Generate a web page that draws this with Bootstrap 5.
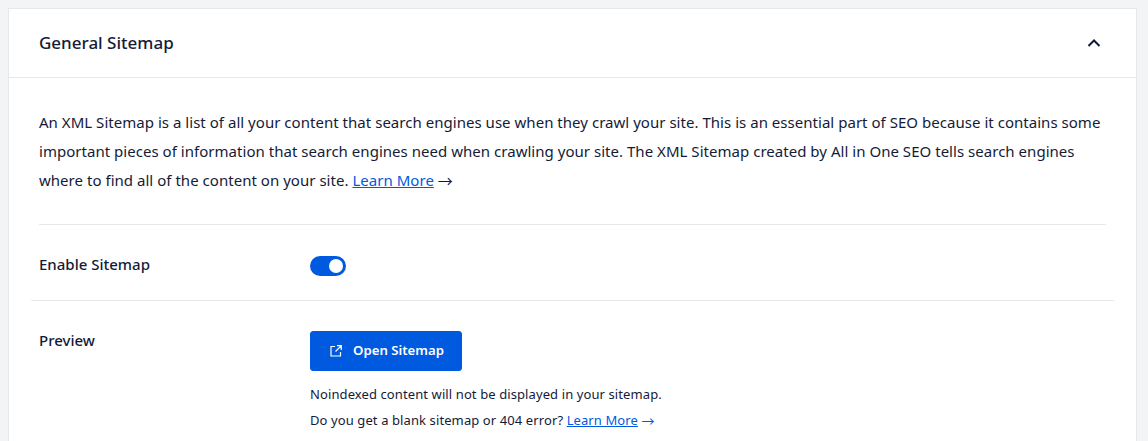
<!DOCTYPE html>
<html lang="en"><head><meta charset="utf-8"><title>General Sitemap</title>
<link href="https://cdn.jsdelivr.net/npm/bootstrap@5.3.0/dist/css/bootstrap.min.css" rel="stylesheet">
<style>
html,body{height:441px;overflow:hidden}
body{background:#f3f4f5;font-family:"Noto Sans","Open Sans",sans-serif;color:#141b38;padding:8px 11px 0 8px}
.sm-panel{background:#fff;border:1px solid #e8e8eb;border-bottom:0;height:433px;overflow:hidden}
.sm-head{height:69px;padding:0 35px 0 30px;border-bottom:1px solid #e8e8eb}
.sm-title{font-size:17px;font-weight:500;margin:0;line-height:1.2}
.sm-body{padding:30px 22px 0}
.sm-intro{font-size:15px;line-height:29px;margin:0 8px;padding-bottom:29px;border-bottom:1px solid #e8e8eb;letter-spacing:.03px}
.sm-row{padding:0 8px}
.sm-row1{height:76px;padding-top:6px;border-bottom:1px solid #e8e8eb}
.sm-row1 .sm-label{margin-bottom:4px}
.sm-row2{padding-top:30px}
.sm-label{width:271px;flex:none;font-size:15px;font-weight:500;line-height:18px}
.sm-toggle{width:36px;height:20px;border-radius:10px;background:#005ae0;position:relative}
.sm-toggle::after{content:"";position:absolute;right:3px;top:3px;width:14px;height:14px;border-radius:50%;background:#fff}
.sm-btn{background:#005ae0;border-color:#005ae0;color:#fff;font-size:13.2px;font-weight:600;width:152px;height:40px;border-radius:3px;padding:0 0 0 2px}
.sm-btn svg{margin-right:3px}
.sm-note{font-size:13px;line-height:26px;margin:0;letter-spacing:.1px}
.sm-note-first{margin-top:10px}
a.sm-link{color:#005ae0}
.sm-arrow{font-family:"Noto Sans CJK SC",sans-serif;line-height:1;vertical-align:-1px}
.sm-arrow-blue{color:#005ae0}
</style></head><body>
<div class="sm-panel">
<div class="sm-head d-flex align-items-center justify-content-between">
<h2 class="sm-title">General Sitemap</h2>
<svg width="14" height="14" viewBox="0 0 14 14" fill="none" stroke="#141b38" stroke-width="2"><path d="M1.500 10l5.500-5.500 5.500 5.500"/></svg>
</div>
<div class="sm-body">
<p class="sm-intro">An XML Sitemap is a list of all your content that search engines use when they crawl your site. This is an essential part of SEO because it contains some important pieces of information that search engines need when crawling your site. The XML Sitemap created by All in One SEO tells search engines where to find all of the content on your site. <a class="sm-link" href="#">Learn More</a> <span class="sm-arrow">→</span></p>
<div class="sm-row sm-row1 d-flex align-items-center">
<div class="sm-label">Enable Sitemap</div>
<div class="sm-toggle"></div>
</div>
<div class="sm-row sm-row2 d-flex">
<div class="sm-label">Preview</div>
<div>
<button class="btn sm-btn d-flex align-items-center justify-content-center gap-2" type="button">
<svg width="12" height="12" viewBox="0 0 12 12" fill="none" stroke="#fff" stroke-width="1.2"><path d="M5 1.500H1v9.500h9.500V7M7 .7h4.300V5M11 1L5.500 6.500"/></svg>Open Sitemap</button>
<p class="sm-note sm-note-first">Noindexed content will not be displayed in your sitemap.</p>
<p class="sm-note">Do you get a blank sitemap or 404 error? <a class="sm-link" href="#">Learn More</a> <span class="sm-arrow sm-arrow-blue">→</span></p>
</div>
</div>
</div>
</div>
<script src="https://cdn.jsdelivr.net/npm/bootstrap@5.3.0/dist/js/bootstrap.bundle.min.js"></script>
</body></html>
